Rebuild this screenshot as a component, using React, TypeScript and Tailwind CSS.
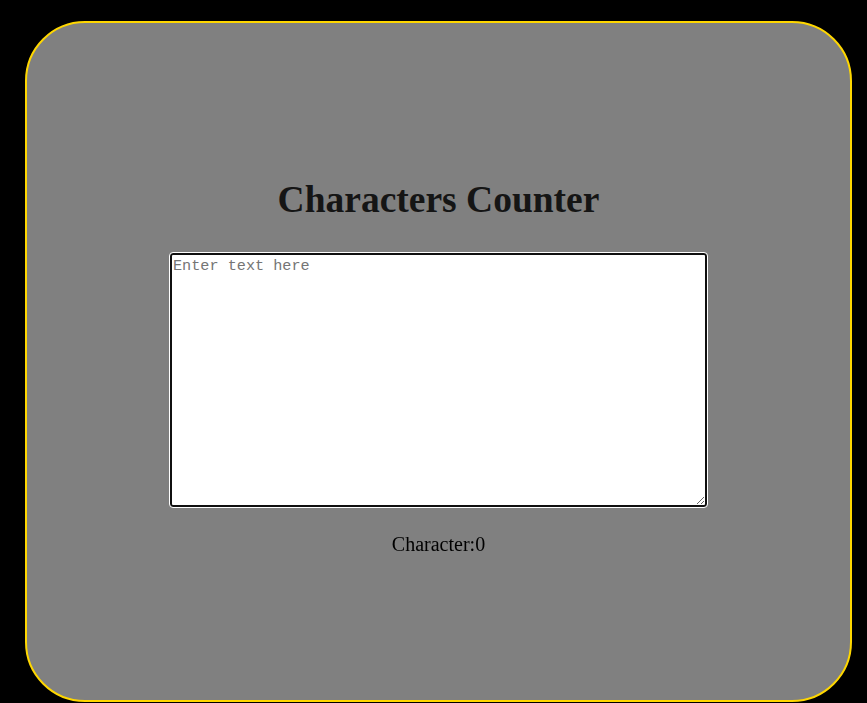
import { useState } from 'react'

export default function App() {
  const [text, setText] = useState('')

  return (
    <div className="min-h-[703px] w-full bg-black overflow-hidden">
      <div
        className="ml-[25px] mt-[21px] w-[827px] h-[681px] rounded-[60px] border-2 border-[#ffd700] bg-[#808080] flex flex-col items-center pt-[155px]"
        style={{ fontFamily: '"Liberation Serif", "Times New Roman", serif' }}
      >
        {/* Heading */}
        <h1 className="text-[37.5px] leading-[43px] font-bold text-[#151515]">Characters Counter</h1>

        {/* Input area */}
        <textarea
          autoFocus
          value={text}
          onChange={(e) => setText(e.target.value)}
          placeholder="Enter text here"
          className="mt-[32px] w-[537px] h-[254px] border-2 border-[#101010] rounded-[3px] outline outline-1 outline-white bg-white px-[1px] pt-[3px] pb-[1px] text-[15.2px] leading-[17px] text-black placeholder:text-[#757575] resize"
          style={{ fontFamily: '"Liberation Mono", "DejaVu Sans Mono", monospace' }}
        />

        {/* Count */}
        <p className="mt-[26px] text-[20px] leading-[23px] text-black">Character:{text.length}</p>
      </div>
    </div>
  )
}
